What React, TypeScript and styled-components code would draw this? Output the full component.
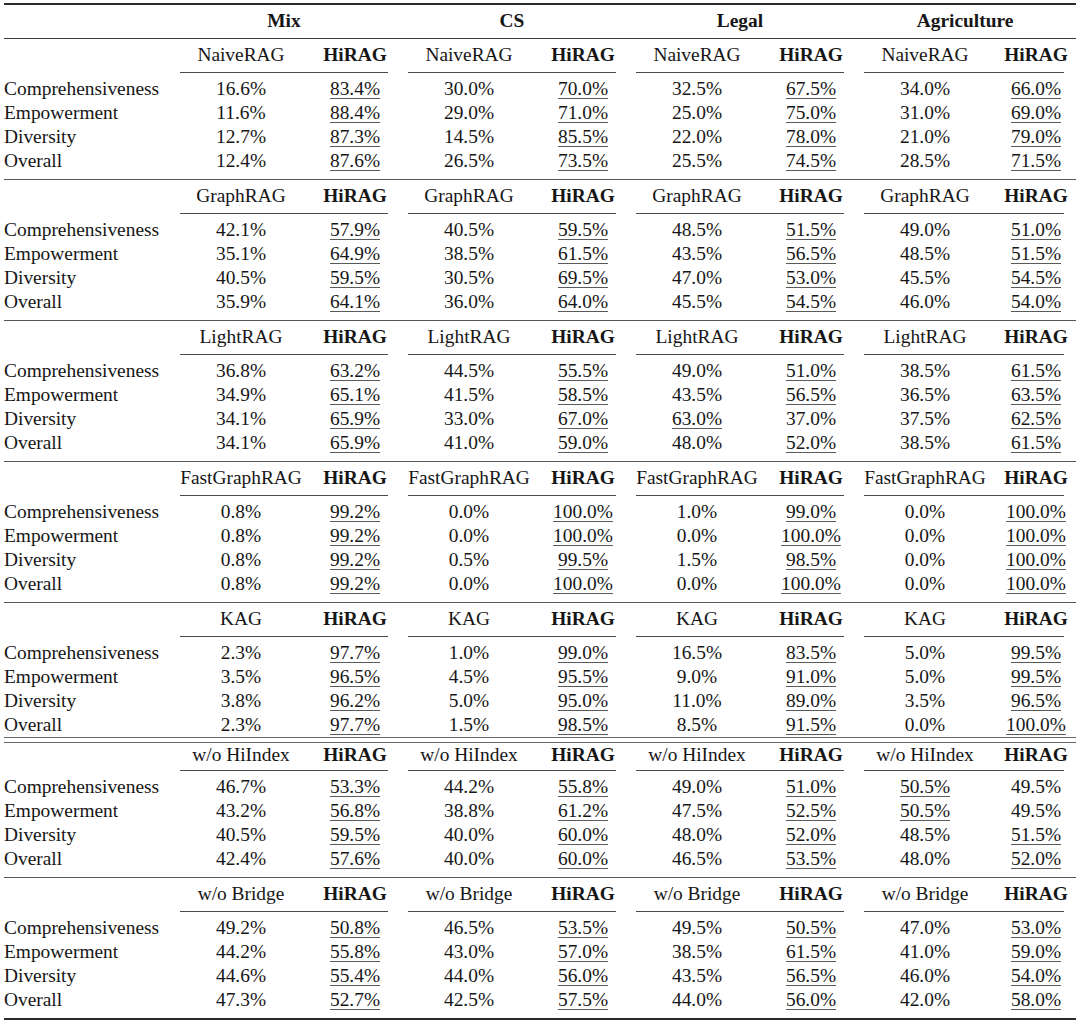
import React from 'react';
import styled, { createGlobalStyle } from 'styled-components';

const GlobalStyle = createGlobalStyle`
  html, body {
    margin: 0;
    padding: 0;
    background: #ffffff;
  }
  body {
    font-family: 'Liberation Serif', 'Times New Roman', serif;
    color: #161616;
  }
`;

const COLS = '166px 142px 86px 142px 86px 142px 86px 142px 80px';

const Table = styled.div`
  width: 1072px;
  padding: 3px 0 0 4px;
  font-size: 19.4px;
`;

const Rule = styled.div<{ $weight: number; $tone?: string }>`
  height: ${(p) => p.$weight}px;
  background: ${(p) => p.$tone || '#3a3a3a'};
`;

const DoubleRule = styled.div`
  display: flex;
  flex-direction: column;
  gap: 4px;
`;

const Grid = styled.div`
  display: grid;
  grid-template-columns: ${COLS};
`;

const HeadRow = styled(Grid)<{ $height: number }>`
  height: ${(p) => p.$height}px;
  box-sizing: border-box;
  align-items: end;
  padding-bottom: 5px;
  line-height: 24px;
`;

const GroupTitle = styled.div`
  grid-column: span 2;
  text-align: center;
  font-weight: 700;
`;

const SubTitle = styled.div<{ $bold?: boolean }>`
  text-align: center;
  font-weight: ${(p) => (p.$bold ? 700 : 400)};
  white-space: nowrap;
`;

const CmidRow = styled(Grid)`
  height: 1px;
`;

const Cmid = styled.div<{ $last?: boolean }>`
  grid-column: span 2;
  height: 1px;
  margin: 0 ${(p) => (p.$last ? 12 : 10)}px 0 10px;
  background: #4a4a4a;
`;

const Body = styled.div<{ $after: number }>`
  padding: 4px 0 ${(p) => p.$after}px;
`;

const DataRow = styled(Grid)`
  height: 24px;
  line-height: 24px;
`;

const Label = styled.div`
  white-space: nowrap;
`;

const Value = styled.div`
  text-align: center;
`;

const Best = styled.span`
  text-decoration: underline;
  text-decoration-thickness: 1px;
  text-underline-offset: 3px;
  text-decoration-color: #5a5a5a;
`;

const groups = ['Mix', 'CS', 'Legal', 'Agriculture'];
const metrics = ['Comprehensiveness', 'Empowerment', 'Diversity', 'Overall'];

type Pair = [number, number];

type Section = {
  baseline: string;
  // one row per metric, one [baseline, HiRAG] pair per dataset
  values: Pair[][];
};

// most pairs add up to 100, so a plain number means [v, 100 - v]
const p = (v: number, ours?: number): Pair => [v, ours ?? Math.round((100 - v) * 10) / 10];
const row = (...vals: (number | Pair)[]) => vals.map((v) => (Array.isArray(v) ? v : p(v)));

const sections: Section[] = [
  { baseline: 'NaiveRAG', values: [row(16.6, 30.0, 32.5, 34.0), row(11.6, 29.0, 25.0, 31.0), row(12.7, 14.5, 22.0, 21.0), row(12.4, 26.5, 25.5, 28.5)] },
  { baseline: 'GraphRAG', values: [row(42.1, 40.5, 48.5, 49.0), row(35.1, 38.5, 43.5, 48.5), row(40.5, 30.5, 47.0, 45.5), row(35.9, 36.0, 45.5, 46.0)] },
  { baseline: 'LightRAG', values: [row(36.8, 44.5, 49.0, 38.5), row(34.9, 41.5, 43.5, 36.5), row(34.1, 33.0, 63.0, 37.5), row(34.1, 41.0, 48.0, 38.5)] },
  { baseline: 'FastGraphRAG', values: [row(0.8, 0.0, 1.0, 0.0), row(0.8, 0.0, 0.0, 0.0), row(0.8, 0.5, 1.5, 0.0), row(0.8, 0.0, 0.0, 0.0)] },
  {
    baseline: 'KAG',
    values: [
      row(2.3, 1.0, 16.5, p(5.0, 99.5)),
      row(3.5, 4.5, 9.0, p(5.0, 99.5)),
      row(3.8, 5.0, 11.0, 3.5),
      row(2.3, 1.5, 8.5, 0.0),
    ],
  },
  { baseline: 'w/o HiIndex', values: [row(46.7, 44.2, 49.0, 50.5), row(43.2, 38.8, 47.5, 50.5), row(40.5, 40.0, 48.0, 48.5), row(42.4, 40.0, 46.5, 48.0)] },
  { baseline: 'w/o Bridge', values: [row(49.2, 46.5, 49.5, 47.0), row(44.2, 43.0, 38.5, 41.0), row(44.6, 44.0, 43.5, 46.0), row(47.3, 42.5, 44.0, 42.0)] },
];

const pct = (v: number) => `${v.toFixed(1)}%`;

const Cell: React.FC<{ value: number; best: boolean }> = ({ value, best }) => (
  <Value>{best ? <Best>{pct(value)}</Best> : pct(value)}</Value>
);

const SectionBlock: React.FC<{ section: Section; headHeight: number; after: number }> = ({
  section,
  headHeight,
  after,
}) => (
  <>
    <HeadRow $height={headHeight}>
      <div />
      {groups.map((g) => (
        <React.Fragment key={g}>
          <SubTitle>{section.baseline}</SubTitle>
          <SubTitle $bold>HiRAG</SubTitle>
        </React.Fragment>
      ))}
    </HeadRow>
    <CmidRow>
      <div />
      {groups.map((g, i) => (
        <Cmid key={g} $last={i === groups.length - 1} />
      ))}
    </CmidRow>
    <Body $after={after}>
      {metrics.map((m, r) => (
        <DataRow key={m}>
          <Label>{m}</Label>
          {section.values[r].map(([v, ours], c) => (
            <React.Fragment key={c}>
              <Cell value={v} best={v > ours} />
              <Cell value={ours} best={ours > v} />
            </React.Fragment>
          ))}
        </DataRow>
      ))}
    </Body>
  </>
);

export default function App() {
  return (
    <>
      <GlobalStyle />
      <Table>
        <Rule $weight={2} $tone="#2a2a2a" />
        <HeadRow $height={33}>
          <div />
          {groups.map((g) => (
            <GroupTitle key={g}>{g}</GroupTitle>
          ))}
        </HeadRow>
        <Rule $weight={1} />
        {sections.map((s, i) => (
          <React.Fragment key={s.baseline}>
            <SectionBlock section={s} headHeight={i === 5 ? 27 : 33} after={i === 4 ? 0 : 6} />
            {i === 4 ? (
              <DoubleRule>
                <Rule $weight={1} $tone="#666" />
                <Rule $weight={1} $tone="#666" />
              </DoubleRule>
            ) : i < sections.length - 1 ? (
              <Rule $weight={1} $tone="#555" />
            ) : (
              <Rule $weight={2} $tone="#2a2a2a" />
            )}
          </React.Fragment>
        ))}
      </Table>
    </>
  );
}
